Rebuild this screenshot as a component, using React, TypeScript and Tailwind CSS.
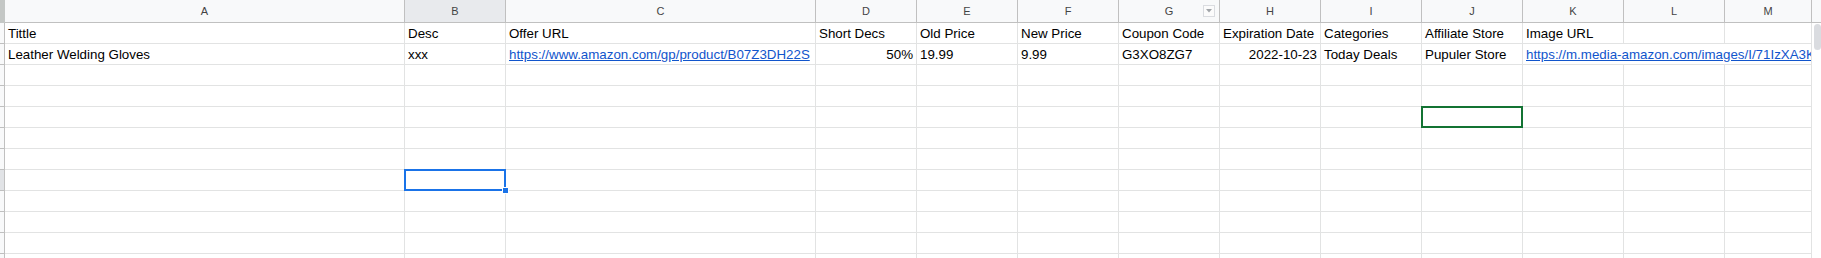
import React from 'react';

interface Col {
    key: string;
    w: string;
}

const cols: Col[] = [
    { key: 'A', w: 'w-[400px]' },
    { key: 'B', w: 'w-[101px]' },
    { key: 'C', w: 'w-[310px]' },
    { key: 'D', w: 'w-[101px]' },
    { key: 'E', w: 'w-[101px]' },
    { key: 'F', w: 'w-[101px]' },
    { key: 'G', w: 'w-[101px]' },
    { key: 'H', w: 'w-[101px]' },
    { key: 'I', w: 'w-[101px]' },
    { key: 'J', w: 'w-[101px]' },
    { key: 'K', w: 'w-[101px]' },
    { key: 'L', w: 'w-[101px]' },
    { key: 'M', w: 'w-[87px]' },
];

type Cell = { text?: string; link?: boolean; right?: boolean };

const headerRow: Cell[] = [
    { text: 'Tittle' },
    { text: 'Desc' },
    { text: 'Offer URL' },
    { text: 'Short Decs' },
    { text: 'Old Price' },
    { text: 'New Price' },
    { text: 'Coupon Code' },
    { text: 'Expiration Date' },
    { text: 'Categories' },
    { text: 'Affiliate Store' },
    { text: 'Image URL' },
    {},
    {},
];

const dataRow: Cell[] = [
    { text: 'Leather Welding Gloves' },
    { text: 'xxx' },
    { text: 'https://www.amazon.com/gp/product/B07Z3DH22S', link: true },
    { text: '50%', right: true },
    { text: '19.99' },
    { text: '9.99' },
    { text: 'G3XO8ZG7' },
    { text: '2022-10-23', right: true },
    { text: 'Today Deals' },
    { text: 'Pupuler Store' },
];

const cellBase =
    'h-[21px] shrink-0 border-r border-b border-[#e2e3e3] px-[3px] pb-[2px] flex items-end text-[13.33px] leading-[15px] whitespace-nowrap overflow-hidden text-black';

function CellText({ cell }: { cell: Cell }) {
    if (!cell.text) return null;
    return (
        <span className={cell.link ? 'text-[#1155cc] underline' : ''}>{cell.text}</span>
    );
}

function RowHead({ active }: { active?: boolean }) {
    return (
        <div
            className={`w-[5px] h-[21px] shrink-0 border-r border-b border-[#c0c0c0] ${active ? 'bg-[#e1e3e6]' : 'bg-[#f8f9fa]'}`}
        />
    );
}

export default function App() {
    const emptyRows = Array.from({ length: 10 }, (_, i) => i + 3);

    return (
        <div className="relative w-[1821px] h-[258px] overflow-hidden bg-white font-['Liberation_Sans',Arial,sans-serif]">
            <div className="flex">
                {/* Grid */}
                <div className="w-[1812px] shrink-0">
                    {/* Column headers */}
                    <div className="flex">
                        <div className="w-[5px] h-[23px] shrink-0 bg-[#c4c7c5]" />
                        {cols.map((c) => (
                            <div
                                key={c.key}
                                className={`${c.w} relative h-[23px] shrink-0 border-r border-b border-[#c0c0c0] flex items-center justify-center text-[11px] text-[#444] ${c.key === 'B' ? 'bg-[#e8eaed]' : 'bg-[#f8f9fa]'}`}
                            >
                                {c.key}
                                {c.key === 'G' && (
                                    <div className="absolute left-[84px] top-[5px] w-[12px] h-[12px] border border-[#dadce0] bg-[#fbfbfb] flex items-center justify-center">
                                        <svg width="6" height="4" viewBox="0 0 6 4">
                                            <polygon points="0,0 6,0 3,3.5" fill="#a0a4a8" />
                                        </svg>
                                    </div>
                                )}
                            </div>
                        ))}
                    </div>

                    {/* Row 1 - headings */}
                    <div className="flex">
                        <RowHead />
                        {cols.map((c, i) => (
                            <div key={c.key} className={`${c.w} ${cellBase}`}>
                                <CellText cell={headerRow[i]} />
                            </div>
                        ))}
                    </div>

                    {/* Row 2 - data */}
                    <div className="flex">
                        <RowHead />
                        {cols.slice(0, 10).map((c, i) => (
                            <div
                                key={c.key}
                                className={`${c.w} ${cellBase} ${dataRow[i].right ? 'justify-end' : ''}`}
                            >
                                <CellText cell={dataRow[i]} />
                            </div>
                        ))}
                        <div className={`w-[289px] ${cellBase}`}>
                            <span className="text-[#1155cc] underline">
                                https://m.media-amazon.com/images/I/71IzXA3KzlL._AC_SL1500_.jpg
                            </span>
                        </div>
                    </div>

                    {/* Empty rows */}
                    {emptyRows.map((r) => (
                        <div key={r} className="flex">
                            <RowHead active={r === 8} />
                            {cols.map((c) => (
                                <div key={c.key} className={`${c.w} ${cellBase}`} />
                            ))}
                        </div>
                    ))}
                </div>

                {/* Vertical scrollbar */}
                <div className="w-[9px] shrink-0 flex flex-col">
                    <div className="h-[23px] bg-[#f8f9fa] border-b border-[#c0c0c0]" />
                    <div className="flex-1 bg-white pl-[2px] pt-[1px]">
                        <div className="w-[7px] h-[26px] rounded-[4px] bg-[#dadce0]" />
                    </div>
                </div>
            </div>

            {/* Selected cell B8 */}
            <div className="absolute left-[404px] top-[169px] w-[102px] h-[22px] border-2 border-[#1a73e8]" />
            <div className="absolute left-[502px] top-[187px] w-[7px] h-[7px] bg-[#1a73e8] border border-white" />

            {/* Collaborator cursor J5 */}
            <div className="absolute left-[1421px] top-[106px] w-[102px] h-[22px] border-2 border-[#137333]" />
        </div>
    );
}
